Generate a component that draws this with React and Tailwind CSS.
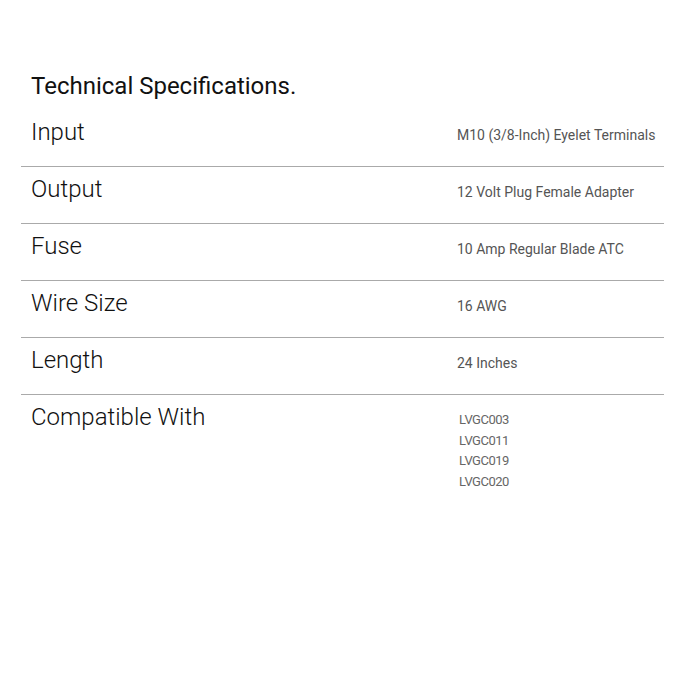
import React from "react";

const specs = [
  { label: "Input", value: "M10 (3/8-Inch) Eyelet Terminals" },
  { label: "Output", value: "12 Volt Plug Female Adapter" },
  { label: "Fuse", value: "10 Amp Regular Blade ATC" },
  { label: "Wire Size", value: "16 AWG" },
  { label: "Length", value: "24 Inches" },
];

const compatible = ["LVGC003", "LVGC011", "LVGC019", "LVGC020"];

const App = () => {
  return (
    <div className="w-[700px] h-[700px] bg-white font-['Roboto',sans-serif]">
      <div className="pl-[21px] pt-[72px] w-[664px]">
        <h2 className="pl-[10px] text-[24px] leading-[28px] font-normal text-[#111] mb-[10px]">
          Technical Specifications.
        </h2>
        {specs.map((spec) => (
          <div
            key={spec.label}
            className="flex items-baseline h-[57px] border-b border-[#aaaaaa]"
          >
            <div className="w-[436px] pl-[10px] pt-[10px] text-[24px] leading-[24px] font-light text-[#111]">
              {spec.label}
            </div>
            <div className="text-[14px] leading-[20px] text-[#555]">
              {spec.value}
            </div>
          </div>
        ))}
        <div className="flex items-baseline">
          <div className="w-[438px] pl-[10px] pt-[10px] text-[24px] leading-[24px] font-light text-[#111]">
            Compatible With
          </div>
          <ul className="-translate-y-px text-[13px] leading-[20.6px] tracking-[-0.5px] text-[#666]">
            {compatible.map((item) => (
              <li key={item}>{item}</li>
            ))}
          </ul>
        </div>
      </div>
    </div>
  );
};

export default App;
